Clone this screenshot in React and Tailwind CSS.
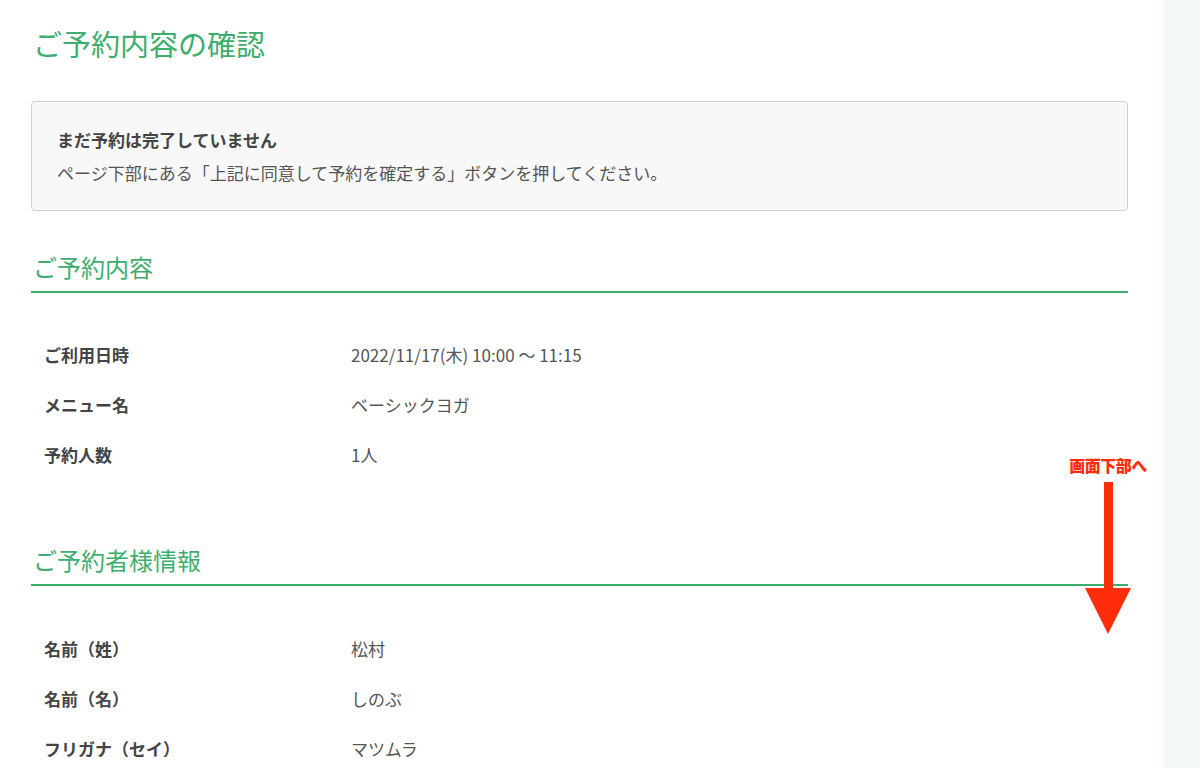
const font = { fontFamily: '"Noto Sans CJK JP", "Noto Sans", sans-serif' }

function SectionHeading({ children }) {
  return (
    <h2 className="pl-[2px] pb-[9px] border-b-2 border-[#3dae6e] text-[24px] leading-[30px] text-[#3dae6e]">
      {children}
    </h2>
  )
}

function InfoRows({ rows }) {
  return (
    <dl className="pl-[13px]">
      {rows.map(([label, value]) => (
        <div key={label} className="flex h-[50px] items-center text-[17px]">
          <dt className="w-[307px] font-bold text-[#444]">{label}</dt>
          <dd className="text-[#555]">{value}</dd>
        </div>
      ))}
    </dl>
  )
}

function ScrollHint() {
  return (
    <div className="absolute left-[1064px] top-[454px] flex w-[88px] flex-col items-center">
      <span className="text-[16px] font-black leading-[22px] text-[#ff2d0a] tracking-[-0.5px]">画面下部へ</span>
      <svg width="46" height="156" viewBox="0 0 46 156" className="mt-[6px]">
        <rect x="19" y="0" width="9" height="110" fill="#ff2d0a" />
        <polygon points="0,106 46,106 23,152" fill="#ff2d0a" />
      </svg>
    </div>
  )
}

export default function App() {
  return (
    <div className="relative flex h-[768px] w-[1200px] overflow-hidden bg-white" style={font}>
      <main className="w-[1164px] pl-[31px]">
        <div className="w-[1097px]">
          <h1 className="mt-[28px] pl-[2px] text-[29px] leading-[30px] text-[#3dae6e]">ご予約内容の確認</h1>

          <div className="mt-[43px] rounded border border-[#cfcfcf] bg-[#f8f8f8] px-[25px] py-[21px] text-[17px] leading-[33px]">
            <p className="font-bold text-[#444]">まだ予約は完了していません</p>
            <p className="text-[#555]">ページ下部にある「上記に同意して予約を確定する」ボタンを押してください。</p>
          </div>

          <div className="mt-[41px]">
            <SectionHeading>ご予約内容</SectionHeading>
          </div>
          <div className="mt-[37px]">
            <InfoRows
              rows={[
                ['ご利用日時', '2022/11/17(木) 10:00 〜 11:15'],
                ['メニュー名', 'ベーシックヨガ'],
                ['予約人数', '1人'],
              ]}
            />
          </div>

          <div className="mt-[65px]">
            <SectionHeading>ご予約者様情報</SectionHeading>
          </div>
          <div className="mt-[38px]">
            <InfoRows
              rows={[
                ['名前（姓）', '松村'],
                ['名前（名）', 'しのぶ'],
                ['フリガナ（セイ）', 'マツムラ'],
              ]}
            />
          </div>
        </div>
      </main>
      <aside className="h-full w-[36px] bg-[#f3faf6]" />
      <ScrollHint />
    </div>
  )
}
